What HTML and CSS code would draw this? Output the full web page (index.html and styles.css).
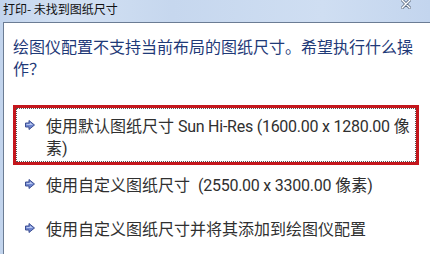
FILE: index.html
```html
<!DOCTYPE html>
<html lang="zh-CN">
<head>
    <meta charset="UTF-8">
    <title>打印- 未找到图纸尺寸</title>
    <link rel="stylesheet" href="styles.css">
</head>
<body>
    <div class="titlebar">
        <span class="title">打印- 未找到图纸尺寸</span>
        <svg class="close" width="10" height="9" viewBox="0 0 10 9">
            <path d="M1 0 L9 8 M9 0 L1 8" stroke="#5a6a80" stroke-width="3" stroke-linecap="round"/>
            <path d="M1 0 L9 8 M9 0 L1 8" stroke="#ffffff" stroke-width="1.4" stroke-linecap="round"/>
        </svg>
    </div>

    <div class="dialog">
        <p class="instruction">绘图仪配置不支持当前布局的图纸尺寸。希望执行什么操作？</p>

        <div class="options">
            <div class="option selected">
                <svg class="arrow" width="10" height="10" viewBox="0 0 10 10">
                    <path d="M0.5 3 H4 V0.5 L9.5 5 L4 9.5 V7 H0.5 Z" fill="#6f86d0" stroke="#3d4f92" stroke-width="1"/>
                    <path d="M1.5 4 H5 V2.5 L8 5 H1.5 Z" fill="#b9c7f0"/>
                </svg>
                <span class="label">使用默认图纸尺寸 <span class="latin">Sun Hi-Res (1600.00 x 1280.00</span> 像素)</span>
            </div>
            <div class="option">
                <svg class="arrow" width="10" height="10" viewBox="0 0 10 10">
                    <path d="M0.5 3 H4 V0.5 L9.5 5 L4 9.5 V7 H0.5 Z" fill="#6f86d0" stroke="#3d4f92" stroke-width="1"/>
                    <path d="M1.5 4 H5 V2.5 L8 5 H1.5 Z" fill="#b9c7f0"/>
                </svg>
                <span class="label">使用自定义图纸尺寸&nbsp; <span class="latin">(2550.00 x 3300.00</span> 像素)</span>
            </div>
            <div class="option">
                <svg class="arrow" width="10" height="10" viewBox="0 0 10 10">
                    <path d="M0.5 3 H4 V0.5 L9.5 5 L4 9.5 V7 H0.5 Z" fill="#6f86d0" stroke="#3d4f92" stroke-width="1"/>
                    <path d="M1.5 4 H5 V2.5 L8 5 H1.5 Z" fill="#b9c7f0"/>
                </svg>
                <span class="label">使用自定义图纸尺寸并将其添加到绘图仪配置</span>
            </div>
        </div>
    </div>
</body>
</html>
```

FILE: styles.css
```css
* {
    margin: 0;
    padding: 0;
    box-sizing: border-box;
}

body {
    width: 430px;
    height: 254px;
    overflow: hidden;
    background: linear-gradient(90deg, #c2d4ed 0%, #d3e1f3 15%, #c6d7ee 40%, #cfdef2 75%, #c3d5ee 100%);
    font-family: Roboto, "Noto Sans CJK SC", sans-serif;
}

.titlebar {
    height: 22px;
    display: flex;
    align-items: flex-start;
    justify-content: space-between;
    padding: 1px 19px 0 3px;
}

.title {
    font-family: "Noto Sans CJK SC", sans-serif;
    font-size: 12px;
    line-height: 16px;
    color: #111111;
}

.close {
    margin-top: -1px;
}

.dialog {
    margin-left: 3px;
    height: 232px;
    background-color: #ffffff;
    border-left: 1px solid #6b7c94;
    border-top: 1px solid #6b7c94;
    padding: 12px 11px 0 9px;
}

.instruction {
    font-family: "Noto Sans CJK SC", sans-serif;
    font-size: 16px;
    line-height: 22px;
    color: #1f3a78;
}

.options {
    margin-top: 26px;
}

.option {
    display: flex;
    align-items: flex-start;
    gap: 11px;
    padding: 7px 0 9px 9px;
    border: 3px solid transparent;
}

.option.selected {
    padding: 8px 0 2px 9px;
    border-color: #c4161c;
    outline: 1px dotted #555555;
    outline-offset: -4px;
}

.arrow {
    flex: none;
    margin-top: 4px;
}

.label {
    font-size: 16px;
    line-height: 22px;
    color: #303030;
}

.latin {
    letter-spacing: -0.25px;
}
```
